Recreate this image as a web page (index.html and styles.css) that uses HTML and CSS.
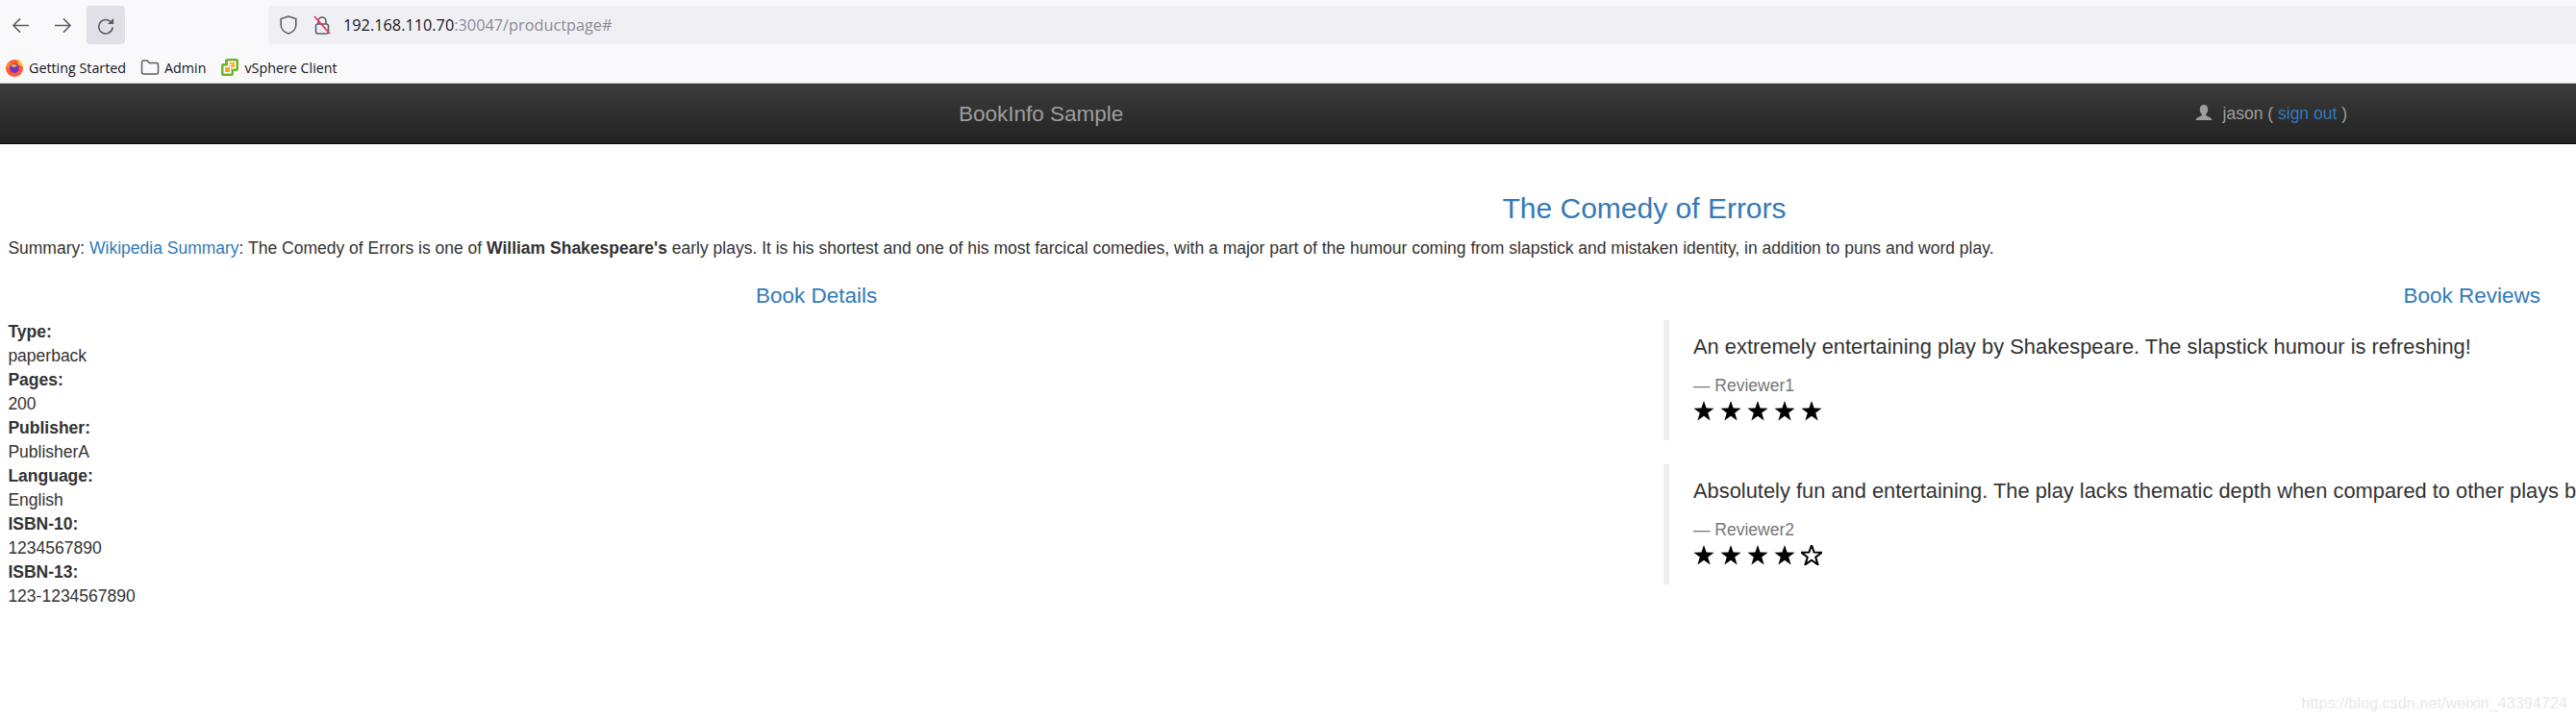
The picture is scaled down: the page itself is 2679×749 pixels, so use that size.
FILE: index.html
```html
<!DOCTYPE html>
<html lang="en">
<head>
<meta charset="UTF-8" />
<title>Simple Bookstore App</title>
<link rel="stylesheet" href="styles.css">
</head>
<body>
<svg class="defs" aria-hidden="true" width="0" height="0">
  <symbol id="star" viewBox="0 0 22 21">
    <polygon points="11,0 13.6,7.6 21.6,7.7 15.2,12.6 17.6,20.4 11,15.7 4.4,20.4 6.8,12.6 0.4,7.7 8.4,7.6" />
  </symbol>
</svg>

<!-- browser toolbar -->
<div class="browser">
  <div class="toolbar">
    <span class="nav-btn">
      <svg viewBox="0 0 20 20" fill="none" stroke="#5b5b66" stroke-width="1.6"><path d="M19 10H2M9.5 2.5 2 10l7.500 7.500" /></svg>
    </span>
    <span class="nav-btn">
      <svg viewBox="0 0 20 20" fill="none" stroke="#5b5b66" stroke-width="1.6"><path d="M1 10h17M10.500 2.500 18 10l-7.500 7.500" /></svg>
    </span>
    <span class="nav-btn reload">
      <svg viewBox="0 0 20 20" fill="none" stroke="#5b5b66" stroke-width="1.7"><path d="M16.500 8.500A7.600 7.600 0 1 0 17 12" /><path d="M18 2v6.500h-6.500" fill="#5b5b66" stroke="none" /></svg>
    </span>
    <div class="urlbar">
      <svg class="url-icon" viewBox="0 0 18 20" fill="none" stroke="#5b5b66" stroke-width="1.6"><path d="M9 1 16.800 3.500V10c0 4.500-3.800 7.800-7.800 9C5 17.800 1.200 14.500 1.200 10V3.500z" /></svg>
      <svg class="url-icon lock" viewBox="0 0 18 20" fill="none"><path d="M5 9V6a4 4 0 0 1 8 0v3" stroke="#5b5b66" stroke-width="1.600" /><rect x="2.500" y="9" width="13" height="10" rx="2" stroke="#5b5b66" stroke-width="1.600" /><path d="M1 1l16 18" stroke="#f0345f" stroke-width="1.800" /></svg>
      <span class="url-text">192.168.110.70<span class="url-rest">:30047/productpage#</span></span>
    </div>
  </div>
  <div class="bookmarks">
    <span class="bookmark">
      <svg viewBox="0 0 20 20">
        <circle cx="10" cy="11" r="9" fill="#ff5a3c" />
        <path d="M13 1c3 2 6 5 6 9l-5-3c0-2-1-4-1-6z" fill="#ffc126" />
        <path d="M2 7c2-2 4-2 5-2-2 2-4 4-4 8z" fill="#ff9a1f" />
        <circle cx="10" cy="11" r="4.800" fill="#6b35c9" />
        <path d="M6 8c3-2 6-1 7 1l-4 1z" fill="#ffb02e" />
      </svg>
      Getting Started
    </span>
    <span class="bookmark">
      <svg viewBox="0 0 20 20" fill="none" stroke="#5b5b66" stroke-width="1.500"><path d="M1.500 5a2 2 0 0 1 2-2h3.500l2.500 2.500h7a2 2 0 0 1 2 2V15a2 2 0 0 1-2 2h-13a2 2 0 0 1-2-2z" /></svg>
      Admin
    </span>
    <span class="bookmark">
      <svg viewBox="0 0 20 20">
        <path d="M7 1h10a2 2 0 0 1 2 2v9a2 2 0 0 1-2 2h-3v3a2 2 0 0 1-2 2H3a2 2 0 0 1-2-2V8a2 2 0 0 1 2-2h2V3a2 2 0 0 1 2-2z" fill="#6fb52c" />
        <path d="M8 3.500h8.500V11.500H12V8H8z" fill="#fff" />
        <path d="M3.500 8.500H11.500V16.500H3.500z" fill="#fff" />
        <path d="M9.500 5h5.500v5h-3V7h-2.500z" fill="#f7b125" />
        <path d="M5 10h5v5H5z" fill="#f7a81b" />
      </svg>
      vSphere Client
    </span>
  </div>
</div>

<div class="page">
  <nav class="navbar">
    <span class="brand">BookInfo Sample</span>
    <span class="user">
      <svg class="user-icon" viewBox="0 0 18 18"><path d="M9 0c2.700 0 4.200 2 4.200 4.700 0 2-.8 4-2 5v1.600c1.800.9 5.800 2 6.300 4.700H.5c.5-2.700 4.500-3.800 6.300-4.700V9.700c-1.200-1-2-3-2-5C4.800 2 6.300 0 9 0z" /></svg>
      <span>jason ( <a href="#">sign out</a> )</span>
    </span>
  </nav>

  <main class="content">
    <h3 class="book-title">The Comedy of Errors</h3>
    <p class="summary">Summary: <a href="#">Wikipedia Summary</a>: The Comedy of Errors is one of <strong>William Shakespeare's</strong> early plays. It is his shortest and one of his most farcical comedies, with a major part of the humour coming from slapstick and mistaken identity, in addition to puns and word play.</p>

    <div class="columns">
      <section>
        <h4 class="col-title">Book Details</h4>
        <dl class="details">
          <dt>Type:</dt><dd>paperback</dd>
          <dt>Pages:</dt><dd>200</dd>
          <dt>Publisher:</dt><dd>PublisherA</dd>
          <dt>Language:</dt><dd>English</dd>
          <dt>ISBN-10:</dt><dd>1234567890</dd>
          <dt>ISBN-13:</dt><dd>123-1234567890</dd>
        </dl>
      </section>

      <section>
        <h4 class="col-title">Book Reviews</h4>
        <blockquote class="review">
          <p>An extremely entertaining play by Shakespeare. The slapstick humour is refreshing!</p>
          <small>&mdash; Reviewer1</small>
          <div class="stars">
            <svg class="star"><use href="#star" /></svg>
            <svg class="star"><use href="#star" /></svg>
            <svg class="star"><use href="#star" /></svg>
            <svg class="star"><use href="#star" /></svg>
            <svg class="star"><use href="#star" /></svg>
          </div>
        </blockquote>
        <blockquote class="review">
          <p>Absolutely fun and entertaining. The play lacks thematic depth when compared to other plays by Shakespeare.</p>
          <small>&mdash; Reviewer2</small>
          <div class="stars">
            <svg class="star"><use href="#star" /></svg>
            <svg class="star"><use href="#star" /></svg>
            <svg class="star"><use href="#star" /></svg>
            <svg class="star"><use href="#star" /></svg>
            <svg class="star empty"><use href="#star" /></svg>
          </div>
        </blockquote>
      </section>
    </div>
  </main>
</div>

<span class="watermark">https://blog.csdn.net/weixin_43394724</span>
</body>
</html>
```

FILE: styles.css
```css
/* Reset and base */
* {
  box-sizing: border-box;
}
html, body {
  margin: 0;
  height: 100%;
  overflow: hidden;
}
body {
  position: relative;
  background: #fff;
  color: #333;
  font-family: "Liberation Sans", Arial, sans-serif;
  font-size: 17.5px;
  line-height: 25px;
}
a {
  color: #337ab7;
  text-decoration: none;
}
.defs {
  display: block;
  height: 0;
}

/* Browser toolbar */
.browser {
  height: 87px;
  padding-top: 6px;
  background: #f9f9fb;
  border-bottom: 1px solid #c8c8cc;
  font-family: "Open Sans", sans-serif;
}
.toolbar {
  display: flex;
  align-items: center;
  height: 40px;
}
.nav-btn {
  display: flex;
  align-items: center;
  justify-content: center;
  width: 40px;
  height: 40px;
  margin-right: 5px;
  border-radius: 4px;
}
.nav-btn:first-child {
  margin-left: 1px;
  margin-right: 4px;
}
.nav-btn svg {
  width: 19px;
  height: 19px;
}
.nav-btn.reload {
  background: #e0e0e6;
}
.urlbar {
  display: flex;
  align-items: center;
  flex: 1;
  height: 40px;
  margin-left: 144px;
  padding-left: 12px;
  background: #f0f0f4;
  border-radius: 4px 0 0 4px;
}
.url-icon {
  width: 18px;
  height: 20px;
  margin-right: 17px;
}
.url-icon.lock {
  margin-right: 13px;
}
.url-text {
  color: #15141a;
  font-size: 16.3px;
}
.url-rest {
  color: #8a8a90;
}
.bookmarks {
  display: flex;
  align-items: center;
  gap: 15px;
  height: 40px;
  padding: 8px 0 0 5px;
  color: #15141a;
  font-size: 14.3px;
}
.bookmark {
  display: flex;
  align-items: center;
  gap: 5px;
}
.bookmark svg {
  width: 20px;
  height: 20px;
}

/* Page is wider than the window, it runs off on the right */
.page {
  width: 3420px;
}
.navbar {
  display: flex;
  justify-content: space-between;
  align-items: center;
  height: 63px;
  padding: 0 979px 0 997px;
  background: linear-gradient(to bottom, #3c3c3c 0, #222 100%);
  border-bottom: 1px solid #080808;
  color: #9d9d9d;
}
.brand {
  font-size: 22.5px;
}
.user {
  display: flex;
  align-items: center;
}
.user-icon {
  width: 18px;
  height: 18px;
  margin-right: 11px;
  fill: #9d9d9d;
}

/* Content */
.content {
  padding: 50px 8.4px 0;
}
.book-title {
  margin: 0 0 13px;
  color: #337ab7;
  font-size: 30px;
  font-weight: 500;
  line-height: 33px;
  text-align: center;
}
.summary {
  margin: 0 0 24.5px;
}
.columns {
  display: grid;
  grid-template-columns: 1fr 1fr;
  gap: 40px;
}
.col-title {
  margin: 0 0 12.5px;
  color: #337ab7;
  font-size: 22.5px;
  font-weight: 500;
  line-height: 24.75px;
  text-align: center;
}
.details {
  margin: 0;
}
.details dt {
  font-weight: 700;
}
.details dd {
  margin: 0;
}

/* Reviews */
.review {
  margin: 0 0 25px;
  padding: 12.5px 25px;
  border-left: 6.25px solid #eee;
  font-size: 21.875px;
  line-height: 31.25px;
}
.review p {
  margin: 0 0 12.5px;
}
.review small {
  display: block;
  color: #777;
  font-size: 17.5px;
  line-height: 25px;
}
.stars {
  display: flex;
  align-items: center;
  gap: 6px;
  height: 31.25px;
  padding-bottom: 5px;
}
.star {
  width: 22px;
  height: 21px;
  fill: #000;
}
.star.empty {
  fill: #fff;
  stroke: #000;
  stroke-width: 2px;
}

.watermark {
  position: absolute;
  right: 9px;
  bottom: 8px;
  color: #e9e9e9;
  font-size: 16.25px;
  line-height: 20px;
}
```
